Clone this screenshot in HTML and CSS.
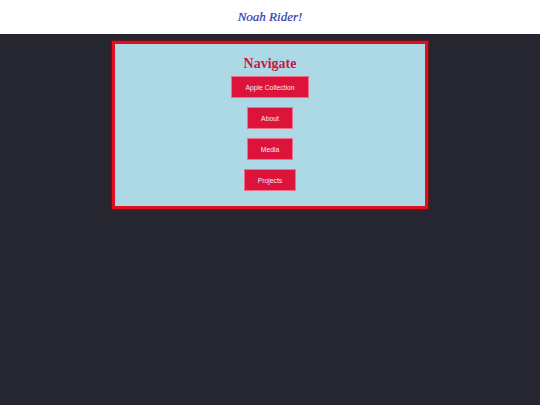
FILE: index.html
```html
<!DOCTYPE html>
<html lang="en">
<head>
    <meta charset="UTF-8">
    <title>Noah Rider!</title>
    <link rel="stylesheet" href="styles.css">
</head>
<body>
    <header class="site-header">
        <h1 class="site-title">Noah Rider!</h1>
    </header>

    <div class="nav-box">
        <h2 class="nav-title">Navigate</h2>
        <div class="nav-buttons">
            <button class="nav-btn">Apple Collection</button>
            <button class="nav-btn">About</button>
            <button class="nav-btn">Media</button>
            <button class="nav-btn">Projects</button>
        </div>
    </div>
</body>
</html>
```

FILE: styles.css
```css
* {
    margin: 0;
    padding: 0;
    box-sizing: border-box;
}

body {
    background-color: #262630;
    font-family: 'Liberation Serif', serif;
    height: 100vh;
}

.site-header {
    background-color: #fff;
    height: 34px;
    display: flex;
    align-items: center;
    justify-content: center;
}

.site-title {
    font-family: 'Liberation Serif', serif;
    font-style: italic;
    font-weight: normal;
    font-size: 13px;
    color: #3437b0;
    -webkit-text-stroke: 0.2px #3437b0;
}

.nav-box {
    width: 316px;
    height: 168px;
    margin: 7px auto 0;
    background-color: lightblue;
    border: 3px solid #de1020;
    box-shadow: 0 0 2px 1px #8a0c12;
    padding-top: 12px;
    text-align: center;
}

.nav-title {
    font-size: 14px;
    line-height: 16px;
    font-weight: bold;
    color: #c8193f;
    margin-bottom: 4px;
}

.nav-buttons {
    display: flex;
    flex-direction: column;
    align-items: center;
    gap: 9px;
}

.nav-btn {
    font-family: 'Liberation Sans', Arial, sans-serif;
    font-size: 6.8px;
    height: 22px;
    padding: 0 13px;
    background-color: #dc143c;
    color: #f8e8ec;
    border: 1px solid #ee6f8c;
    cursor: pointer;
}
```
